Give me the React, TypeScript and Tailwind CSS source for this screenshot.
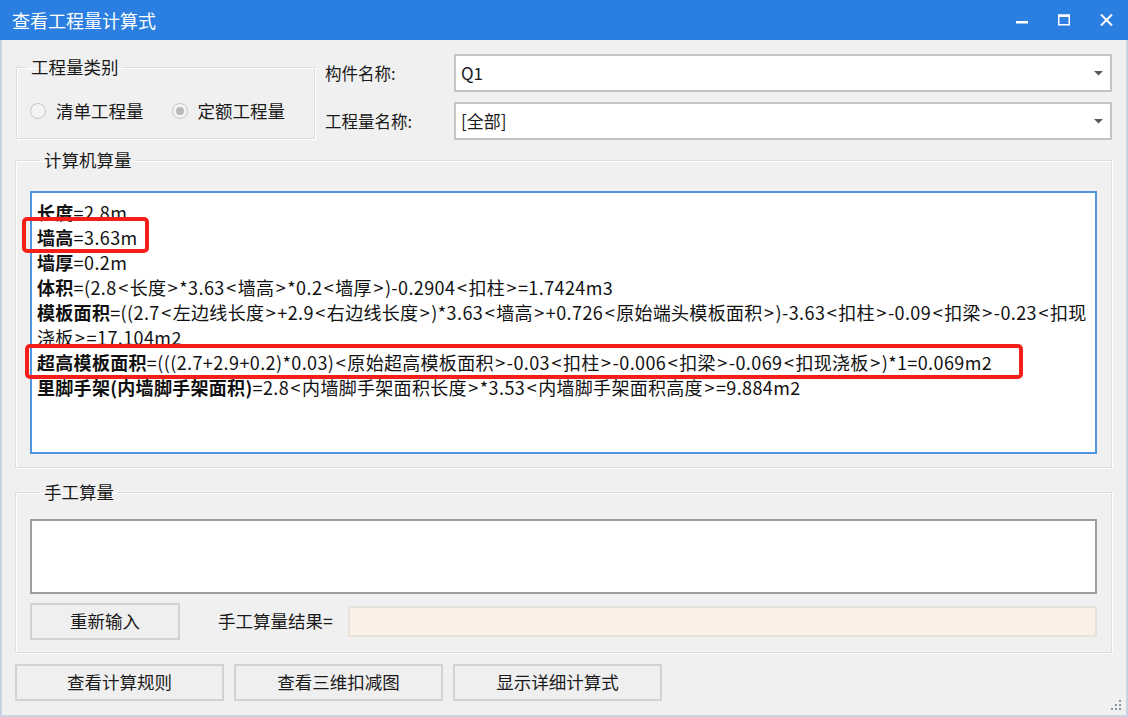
import type { ReactNode } from 'react';

const FONT = "font-['Noto_Sans_CJK_SC','Noto_Sans',sans-serif]";

function Combo({ value }: { value: string }) {
  return (
    <div className="flex h-[38px] items-center justify-between border-2 border-[#c4c4c4] bg-white pl-[5px] pr-[7px]">
      <span className="text-[17px] text-[#1a1a1a]">{value}</span>
      <svg width="9" height="5" viewBox="0 0 9 5">
        <path d="M0 0h9L4.5 4.5z" fill="#5a5a5a" />
      </svg>
    </div>
  );
}

function Radio({ label, checked }: { label: string; checked?: boolean }) {
  return (
    <div className="flex items-center">
      <span className="flex h-[16px] w-[16px] items-center justify-center rounded-full border border-[#c6c6c6] bg-[#f3f3f3]">
        {checked && <span className="h-[8px] w-[8px] rounded-full bg-[#b8b8b8]" />}
      </span>
      <span className="ml-[10px] text-[17.5px] text-[#1a1a1a]">{label}</span>
    </div>
  );
}

function Group({ title, className, children }: { title: string; className?: string; children: ReactNode }) {
  return (
    <fieldset
      className={`border border-[#dedede] shadow-[inset_1px_1px_0_#ffffff,1px_1px_0_#ffffff] ${className ?? ''}`}
    >
      <legend className="ml-[10px] px-[4px] text-[17.5px] leading-[24px] text-[#1a1a1a]">{title}</legend>
      {children}
    </fieldset>
  );
}

function Btn({ label, className }: { label: string; className?: string }) {
  return (
    <button
      type="button"
      className={`flex h-[37px] items-center justify-center border-2 border-[#d2d2d2] bg-[#efefef] text-[17.5px] text-[#1a1a1a] ${className ?? ''}`}
    >
      {label}
    </button>
  );
}

// split into CJK runs, angle brackets and latin runs, spaced like the original font
function Mixed({ text }: { text: string }) {
  const parts = text.split(/([\u4e00-\u9fff]+|[<>])/).filter(Boolean);
  return (
    <>
      {parts.map((p, i) => {
        if (/[\u4e00-\u9fff]/.test(p)) {
          return (
            <span key={i} className="tracking-[0.3px]">
              {p}
            </span>
          );
        }
        if (p === '<' || p === '>') {
          return (
            <span key={i} className="px-[1.5px]">
              {p}
            </span>
          );
        }
        return (
          <span key={i} className="tracking-[0.4px]">
            {p}
          </span>
        );
      })}
    </>
  );
}

const LINES: { b: string; t: string }[] = [
  { b: '长度', t: '=2.8m' },
  { b: '墙高', t: '=3.63m' },
  { b: '墙厚', t: '=0.2m' },
  { b: '体积', t: '=(2.8<长度>*3.63<墙高>*0.2<墙厚>)-0.2904<扣柱>=1.7424m3' },
  {
    b: '模板面积',
    t: '=((2.7<左边线长度>+2.9<右边线长度>)*3.63<墙高>+0.726<原始端头模板面积>)-3.63<扣柱>-0.09<扣梁>-0.23<扣现',
  },
  { b: '', t: '浇板>=17.104m2' },
  {
    b: '超高模板面积',
    t: '=(((2.7+2.9+0.2)*0.03)<原始超高模板面积>-0.03<扣柱>-0.006<扣梁>-0.069<扣现浇板>)*1=0.069m2',
  },
  { b: '里脚手架(内墙脚手架面积)', t: '=2.8<内墙脚手架面积长度>*3.53<内墙脚手架面积高度>=9.884m2' },
];

export default function App() {
  return (
    <div className={`flex h-[717px] w-[1128px] flex-col ${FONT}`}>
      <div className="flex h-[40px] shrink-0 items-center justify-between bg-[#2b7fe0] pl-[12px] pr-[15px] text-white">
        <span className="text-[18px]">查看工程量计算式</span>
        <div className="flex items-center gap-[30px]">
          <svg width="12" height="12" viewBox="0 0 12 12">
            <rect x="0" y="7" width="12" height="2.5" fill="#fff" />
          </svg>
          <svg width="12" height="12" viewBox="0 0 12 12">
            <rect x="0.75" y="1.25" width="10.5" height="9.5" fill="none" stroke="#fff" strokeWidth="1.5" />
            <rect x="0" y="0.5" width="12" height="2.5" fill="#fff" />
          </svg>
          <svg width="13" height="12" viewBox="0 0 13 12">
            <path d="M1 0.5l11 11M12 0.5l-11 11" stroke="#fff" strokeWidth="2" />
          </svg>
        </div>
      </div>

      <div className="relative flex flex-1 flex-col border-x-2 border-b-2 border-[#c7d4e3] bg-[#f0f0f0] pl-[13px] pr-[14px]">
        <div className="flex pt-[14px]">
          <Group title="工程量类别" className="ml-px mt-px h-[84px] w-[299px]">
            <div className="mt-[19px] flex items-center gap-[28px] pl-[13px]">
              <Radio label="清单工程量" />
              <Radio label="定额工程量" checked />
            </div>
          </Group>
          <div className="ml-[10px] grid flex-1 grid-cols-[129px_1fr] items-center gap-y-[10px] text-[16.5px] text-[#1a1a1a]">
            <span>构件名称:</span>
            <Combo value="Q1" />
            <span>工程量名称:</span>
            <Combo value="[全部]" />
          </div>
        </div>

        <Group title="计算机算量" className="mt-[8px] px-[14px] pb-[13px]">
          <div className="relative mt-[19px] h-[263px] border-2 border-[#4f95e0] bg-white pl-[5px] pt-[7px] text-[18px] leading-[25px] text-[#111]">
            {LINES.map((l, i) => (
              <div key={i} className="whitespace-nowrap">
                {l.b && <span className="font-bold tracking-[0.3px]">{l.b}</span>}
                <Mixed text={l.t} />
              </div>
            ))}
            <div className="absolute left-[-10px] top-[24px] h-[36px] w-[127px] rounded-[5px] border-[4px] border-[#f51f1a]" />
            <div className="absolute left-[-7px] top-[151px] h-[35px] w-[998px] rounded-[5px] border-[4px] border-[#f51f1a]" />
          </div>
        </Group>

        <Group title="手工算量" className="mt-[12px] px-[14px] pb-[12px]">
          <div className="mt-[15px] h-[75px] border-2 border-[#9d9d9d] bg-white" />
          <div className="mt-[9px] flex h-[37px] items-center">
            <Btn label="重新输入" className="w-[150px]" />
            <span className="ml-[38px] w-[130px] text-[17.5px] text-[#1a1a1a]">手工算量结果=</span>
            <div className="h-[31px] flex-1 border-2 border-[#e8e2dc] bg-[#faf0e6]" />
          </div>
        </Group>

        <div className="mt-[11px] flex gap-[10px]">
          <Btn label="查看计算规则" className="w-[209px]" />
          <Btn label="查看三维扣减图" className="w-[209px]" />
          <Btn label="显示详细计算式" className="w-[209px]" />
        </div>

        <svg className="absolute bottom-[3px] right-[3px]" width="12" height="12" viewBox="0 0 12 12">
          <g fill="#8a96a6">
            <rect x="8" y="0" width="2" height="2" />
            <rect x="4" y="4" width="2" height="2" />
            <rect x="8" y="4" width="2" height="2" />
            <rect x="0" y="8" width="2" height="2" />
            <rect x="4" y="8" width="2" height="2" />
            <rect x="8" y="8" width="2" height="2" />
          </g>
        </svg>
      </div>
    </div>
  );
}
